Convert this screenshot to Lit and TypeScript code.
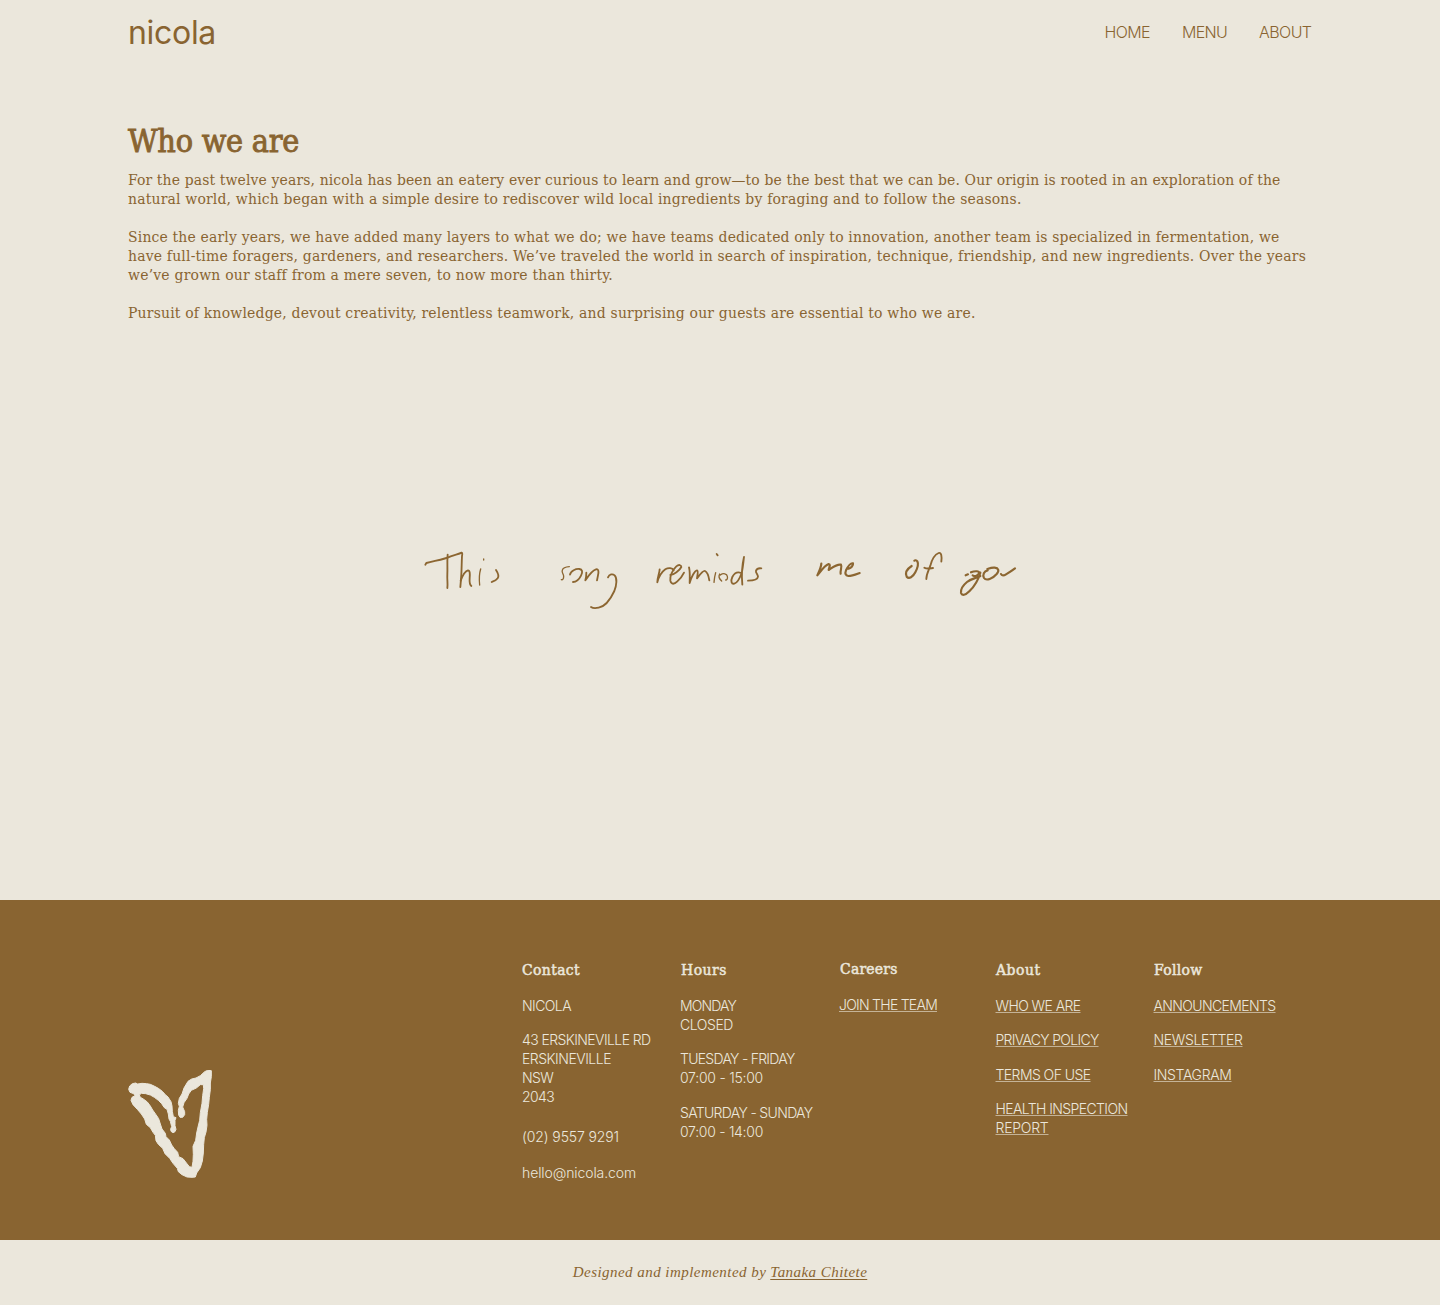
import { LitElement, html, css, svg } from "lit";
import { customElement } from "lit/decorators.js";
import { styleMap } from "lit/directives/style-map.js";

const SERIF = '"DejaVu Serif Condensed", "Liberation Serif", serif';
const SANS = 'Inter, "Liberation Sans", sans-serif';

const ctx = document.createElement("canvas").getContext("2d")!;

/** Letter spacing that sets a line of text to the given measure. */
const tracking = (text: string, font: string, measure: number) => {
  ctx.font = font;
  const natural = ctx.measureText(text).width;
  return `${((measure - natural) / text.length).toFixed(4)}px`;
};

const fitted = (text: string, font: string, measure: number) =>
  html`<span class="fit" style=${styleMap({ letterSpacing: tracking(text, font, measure) })}>${text}</span>`;

type Line = [string, number];

const BODY = `400 15.5px ${SERIF}`;
const SMALL = `300 14px ${SANS}`;
const HEAD = `400 15.5px ${SERIF}`;
const TITLE = `400 32px ${SERIF}`;
const CREDIT = `italic 400 15px "Liberation Serif", serif`;

const paragraphs: Line[][] = [
  [
    ["For the past twelve years, nicola has been an eatery ever curious to learn and grow—to be the best that we can be. Our origin is rooted in an exploration of the", 1152.5],
    ["natural world, which began with a simple desire to rediscover wild local ingredients by foraging and to follow the seasons.", 893.5],
  ],
  [
    ["Since the early years, we have added many layers to what we do; we have teams dedicated only to innovation, another team is specialized in fermentation, we", 1151.5],
    ["have full-time foragers, gardeners, and researchers. We’ve traveled the world in search of inspiration, technique, friendship, and new ingredients. Over the years", 1178],
    ["we’ve grown our staff from a mere seven, to now more than thirty.", 484.5],
  ],
  [["Pursuit of knowledge, devout creativity, relentless teamwork, and surprising our guests are essential to who we are.", 847.5]],
];

interface Column {
  name: string;
  title: Line;
  links?: boolean;
  items: Line[][];
}

const columns: Column[] = [
  {
    name: "contact",
    title: ["Contact", 58],
    items: [
      [["NICOLA", 49]],
      [["43 ERSKINEVILLE RD", 128.5], ["ERSKINEVILLE", 89], ["NSW", 31], ["2043", 32]],
      [["(02) 9557 9291", 97]],
      [["hello@nicola.com", 114]],
    ],
  },
  {
    name: "hours",
    title: ["Hours", 46],
    items: [
      [["MONDAY", 56], ["CLOSED", 53]],
      [["TUESDAY - FRIDAY", 114.5], ["07:00 - 15:00", 83]],
      [["SATURDAY - SUNDAY", 132.5], ["07:00 - 14:00", 83]],
    ],
  },
  { name: "careers", title: ["Careers", 57.5], links: true, items: [[["JOIN THE TEAM", 98]]] },
  {
    name: "about",
    title: ["About", 44.5],
    links: true,
    items: [
      [["WHO WE ARE", 85]],
      [["PRIVACY POLICY", 103]],
      [["TERMS OF USE", 95]],
      [["HEALTH INSPECTION", 132], ["REPORT", 53]],
    ],
  },
  {
    name: "follow",
    title: ["Follow", 48.5],
    links: true,
    items: [[["ANNOUNCEMENTS", 122]], [["NEWSLETTER", 89]], [["INSTAGRAM", 78]]],
  },
];

const handwriting = svg`
  <g transform="translate(-30 -24)">
    <path d="M46 74l3-5C75 62 104 58 122 49C136 44 148 42 155 38C158 39 157 43 156 48C155 66 155 85 154 103C153 120 152 130 151 141" />
    <path d="M113 44C111 66 113 83 112 103C111 121 114 130 112 144" />
    <path d="M152 122C158 106 165 93 174 91C180 91 180 102 179 114C178 127 180 135 184 138" />
    <path class="fine" d="M212 87C208 100 207 117 209 135" />
    <path class="fine" d="M221 57v3" />
    <path d="M258 90C264 99 268 108 263 115C258 122 250 124 245 126" />
    <path class="fine" d="M478 80C466 81 459 84 457 90C454 98 461 102 461 109C461 117 458 120 454 119" />
    <path d="M480 104C482 92 498 86 508 87C517 88 519 96 513 107C507 119 500 126 489 126" />
    <path d="M529 98C529 108 528 115 526 121C534 109 545 92 558 88C567 86 566 98 564 106L561 121" />
    <path d="M594 112C598 102 608 101 614 106C622 114 620 136 613 153C600 181 582 200 566 203C557 205 550 206 543 201" />
  </g>
  <g transform="translate(660 -24)">
    <path d="M59 88C59 98 52 112 52 127C56 111 65 96 76 88C86 82 97 84 101 91" />
    <path d="M91 105C101 105 119 91 124 81C124 74 116 73 109 79C97 90 89 109 91 122C94 135 103 133 112 124C121 116 127 109 132 98" />
    <path d="M147 82C151 99 149 113 149 129C154 111 164 92 171 91C176 92 172 105 171 115C179 105 189 91 195 93C204 97 206 109 208 121" />
    <path class="fine" d="M227 98C224 108 223 117 222 127" />
    <path d="M230 42l3 4" />
    <path class="fine" d="M239 102C235 109 237 116 245 123M241 105C250 98 261 101 262 109C264 116 260 120 257 120" />
    <path d="M304 99C291 94 282 101 277 111C271 124 275 133 283 131C294 128 300 113 305 99C309 83 310 66 312 51C306 76 304 103 307 134" />
    <path d="M364 85C357 84 350 87 348 92C346 98 354 103 354 110C353 119 340 122 324 122" />
    <path class="bold" d="M544 71C543 84 537 95 532 106C542 94 554 76 566 72C573 73 567 83 566 90C576 84 590 71 603 74C607 81 600 91 602 101" />
    <path class="bold" d="M626 86C634 84 640 76 639 70C632 68 624 79 618 91C614 101 617 107 625 108C636 108 648 103 659 99" />
  </g>
  <g transform="translate(1380 -24)">
    <path class="bold" d="M95 78C81 87 75 99 80 110C87 118 99 111 106 97C113 84 115 70 112 64C109 60 105 60 103 62" />
    <path d="M184 65C186 49 184 36 176 39C162 45 155 61 151 77C146 91 139 102 139 117M133 83C141 88 151 85 159 84" />
    <path class="bold" d="M257 106l7-3M273 97C285 92 299 93 298 99C294 106 286 111 278 106" />
    <path class="bold" d="M301 98C296 116 283 139 268 154C256 166 246 168 243 159C241 147 249 136 261 126C275 115 291 114 301 108" />
    <path class="bold" d="M323 91C312 93 307 105 312 114C319 124 338 116 350 102C359 91 355 84 344 83C335 82 328 85 322 87" />
    <path class="bold" d="M363 102C365 108 372 107 378 103C388 97 397 91 405 85" />
  </g>
`;

@customElement("app-root")
export class AppRoot extends LitElement {
  static styles = css`
    :host {
      display: flex;
      flex-direction: column;
      min-height: 1305px;
      background: #ebe7dc;
      color: #896431;
      font-family: "DejaVu Serif Condensed", "Liberation Serif", serif;
    }
    .fit {
      white-space: nowrap;
    }
    .bar {
      display: flex;
      justify-content: space-between;
      align-items: center;
      height: 64px;
      padding: 0 128.5px 0 128px;
      font-family: Inter, "Liberation Sans", sans-serif;
    }
    .logo {
      padding-top: 1px;
      font-size: 32px;
      line-height: 40px;
    }
    .nav {
      display: flex;
      gap: 32px;
      font-size: 16px;
      font-weight: 300;
      line-height: 20px;
    }
    a {
      color: inherit;
      text-decoration: none;
    }
    .intro {
      height: 196px;
      padding: 56px 128px 0;
    }
    h1 {
      margin: 0 0 9px;
      font-size: 32px;
      line-height: 42px;
      font-weight: 400;
      -webkit-text-stroke: 0.9px currentColor;
    }
    .text {
      margin: 0 0 19px;
      font-size: 15.5px;
      line-height: 19px;
    }
    .line {
      display: block;
    }
    .art {
      display: flex;
      justify-content: center;
      align-items: center;
      height: 640px;
      margin-top: -56px;
    }
    .script {
      width: 600px;
      height: 64px;
      fill: none;
      stroke: #8c6631;
      stroke-width: 5.5;
      stroke-linecap: round;
      stroke-linejoin: round;
    }
    .fine {
      stroke-width: 4;
    }
    .bold {
      stroke-width: 6.5;
    }
    .footer {
      display: flex;
      justify-content: space-between;
      height: 340px;
      box-sizing: border-box;
      padding: 60px 128px 62px;
      background: #896431;
      color: #ebe7dc;
    }
    .heart {
      align-self: flex-end;
      width: 84px;
      height: 108px;
      fill: #ebe7dc;
      stroke: #ebe7dc;
      stroke-width: 3;
      stroke-linejoin: round;
    }
    .columns {
      display: grid;
      grid-template-columns: repeat(5, 1fr);
      width: 790px;
    }
    h2 {
      margin: 0 0 16px;
      font-size: 15.5px;
      line-height: 20px;
      font-weight: 400;
      -webkit-text-stroke: 0.5px currentColor;
    }
    .hours h2,
    .careers h2 {
      padding-left: 1px;
    }
    .careers {
      padding-left: 1px;
      margin-top: -1px;
    }
    .items {
      display: flex;
      flex-direction: column;
      align-items: flex-start;
      gap: 15px;
      font: 300 14px/19px Inter, "Liberation Sans", sans-serif;
    }
    .about .items,
    .follow .items {
      margin-left: -0.5px;
    }
    .item:nth-child(3) {
      padding-top: 1px;
    }
    .contact .item:nth-child(3) {
      padding-top: 6px;
    }
    .contact .item:nth-child(4) {
      padding-top: 2px;
    }
    .links .fit {
      text-decoration: underline 1px rgba(235, 231, 220, 0.6);
      text-underline-offset: 0.5px;
    }
    .credit {
      display: flex;
      justify-content: center;
      align-items: center;
      gap: 4px;
      height: 65px;
      font: italic 15px "Liberation Serif", serif;
    }
    .credit a {
      text-decoration: underline 1px;
      text-underline-offset: 2px;
    }
  `;

  render() {
    const nav: Line[] = [["HOME", 45.5], ["MENU", 45], ["ABOUT", 52.5]];
    return html`
      <header class="bar">
        <a class="logo">${fitted("nicola", `400 32px ${SANS}`, 88)}</a>
        <nav class="nav">${nav.map(([t, w]) => html`<a>${fitted(t, `300 16px ${SANS}`, w)}</a>`)}</nav>
      </header>
      <main class="intro">
        <h1>${fitted("Who we are", TITLE, 171)}</h1>
        ${paragraphs.map(
          (lines) => html`<p class="text">${lines.map(([t, w]) => html`<span class="line">${fitted(t, BODY, w)}</span>`)}</p>`
        )}
      </main>
      <section class="art">
        <svg class="script" viewBox="0 0 1800 192" role="img" aria-label="This song reminds me of you">${handwriting}</svg>
      </section>
      <footer class="footer">
        <svg class="heart" viewBox="54 60 252 324">
          <path
            fill-rule="evenodd"
            d="M56 118L59 108L67 101L77 99L83 102L96 100L110 101L121 103L134 109L145 115L157 124L166 134L174 141L183 155L186 168L187 184L190 200L198 203L195 211L195 227L198 238L195 245L189 248L183 244L182 237L185 230L181 214L177 207L175 192L171 178L163 173L155 161L145 151L133 142L121 135L107 131L94 130L88 135L91 142L100 147L112 156L121 168L128 180L138 194L146 206L151 222L156 237L166 250L168 260L178 270L185 285L193 296L203 307L206 320L219 326L230 340L238 350L246 352L249 334L250 313L249 289L257 271L260 249L264 231L269 211L271 188L276 160L278 137L281 116L280 104L271 104L259 114L244 121L236 132L231 145L222 158L218 171L224 185L224 194L218 202L210 202L206 195L205 181L208 169L205 160L208 145L216 132L222 114L234 94L245 87L258 84L271 77L284 65L293 61L304 62L304 80L301 99L301 119L298 142L296 163L292 187L290 208L291 226L288 246L283 263L281 283L280 309L277 333L271 353L260 369L256 381L246 382L231 381L216 374L205 365L202 355L189 340L179 325L165 311L158 295L145 283L138 272L136 256L129 247L121 233L109 223L104 207L94 192L82 178L69 164L63 151L66 142L75 137L71 131L60 127Z"
          />
        </svg>
        <div class="columns">
          ${columns.map(
            (c) => html`<section class="${c.name} ${c.links ? "links" : ""}">
              <h2><span style=${styleMap({ letterSpacing: tracking(c.title[0], HEAD, c.title[1]) })}>${c.title[0]}</span></h2>
              <div class="items">
                ${c.items.map(
                  (lines) => html`<a class="item">${lines.map(([t, w]) => html`<span class="line">${fitted(t, SMALL, w)}</span>`)}</a>`
                )}
              </div>
            </section>`
          )}
        </div>
      </footer>
      <div class="credit">${fitted("Designed and implemented by", CREDIT, 193.5)}<a>${fitted("Tanaka Chitete", CREDIT, 97)}</a></div>
    `;
  }
}
